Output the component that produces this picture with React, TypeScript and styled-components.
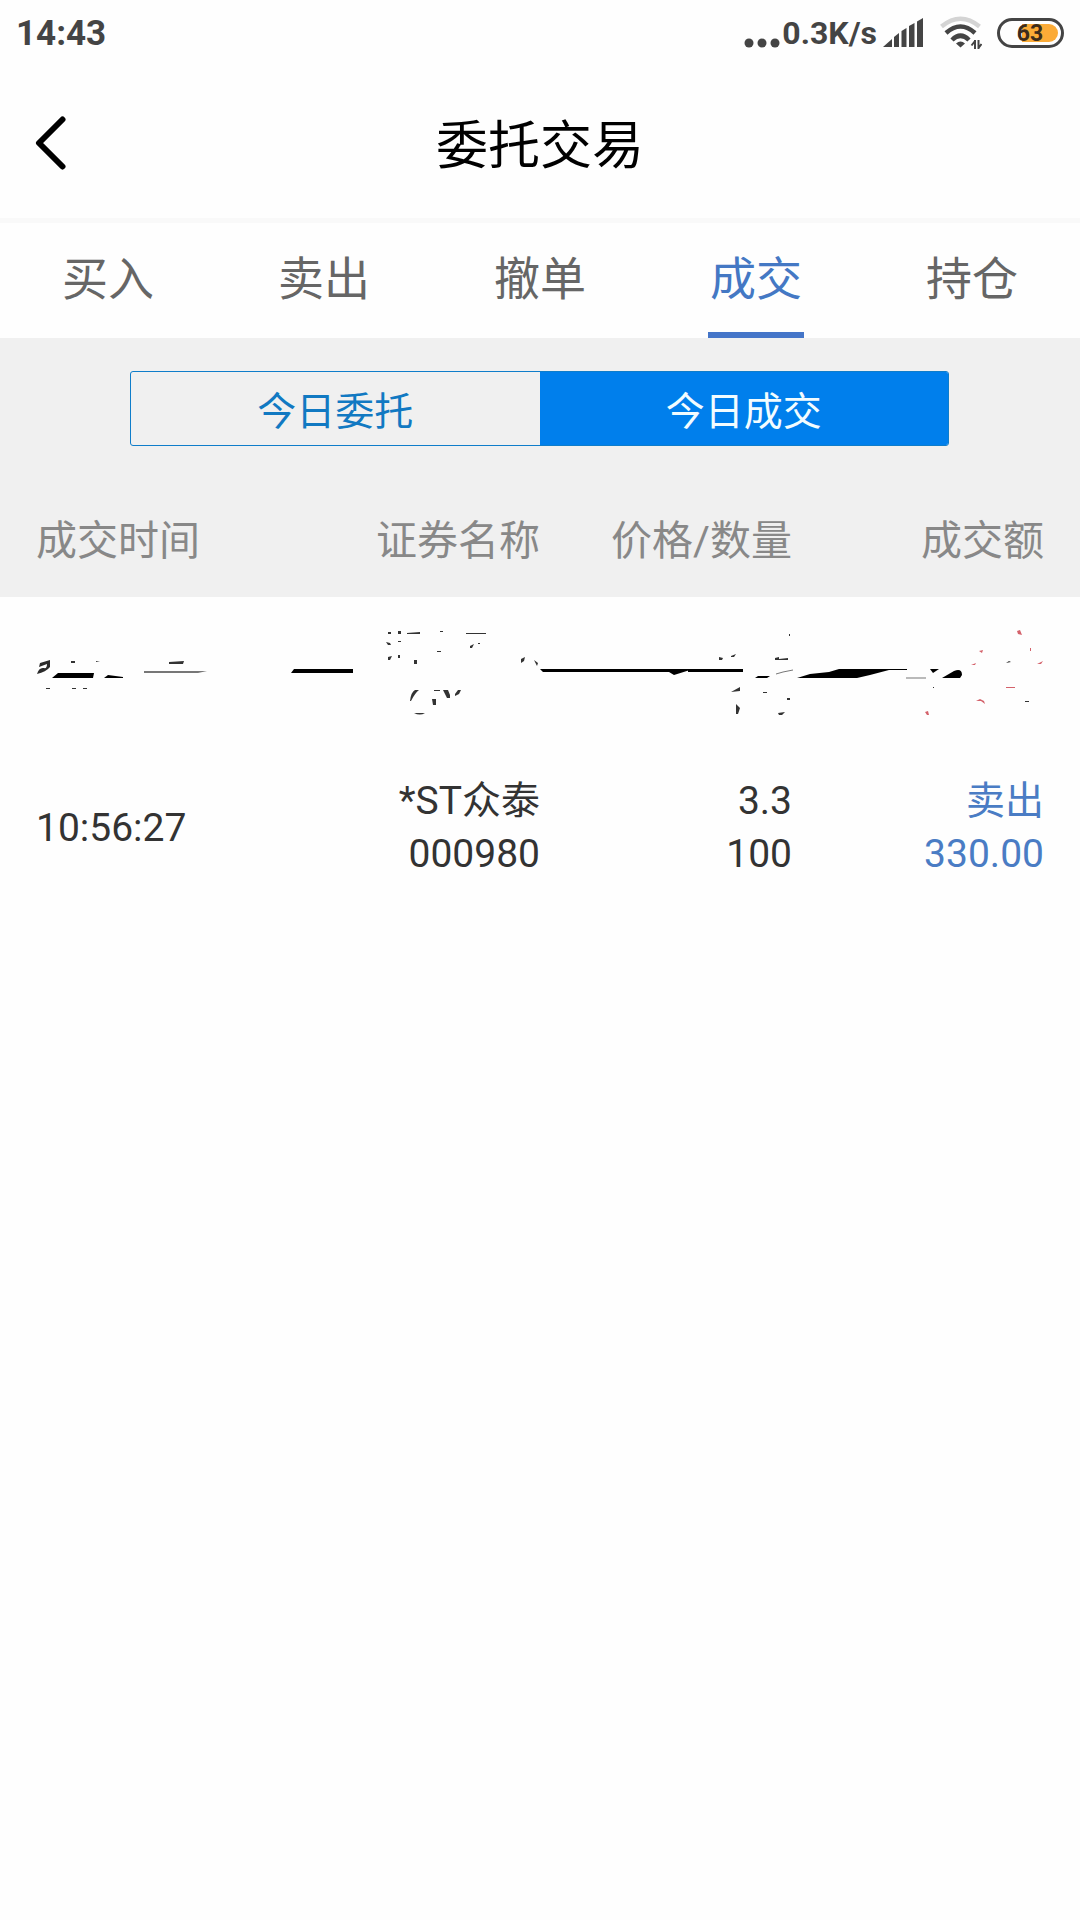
import React, { useState } from "react";
import styled, { createGlobalStyle } from "styled-components";

const GlobalStyle = createGlobalStyle`
  *, *::before, *::after { box-sizing: border-box; }
  body {
    margin: 0;
    background: #fefefe;
    color: #333333;
    font-family: Roboto, "Noto Sans CJK SC", sans-serif;
  }
  button { font-family: inherit; cursor: pointer; }
`;

const Screen = styled.div`
  min-height: 100vh;
  display: flex;
  flex-direction: column;
`;

const StatusBar = styled.div`
  display: flex;
  align-items: center;
  justify-content: space-between;
  height: 68px;
  padding: 0 16px 2px;
  font-size: 32px;
  font-weight: 700;
  color: #444444;
`;

const Clock = styled.span`
  font-size: 35px;
`;

const StatusGroup = styled.div`
  display: flex;
  align-items: center;
`;

const StatusIcon = styled.svg<{ $gap: number }>`
  display: block;
  flex: none;
  margin-left: ${(p) => p.$gap}px;
`;

const BatteryLabel = styled.text`
  font-size: 23px;
  font-weight: 700;
  fill: #3c2b1c;
`;

const Header = styled.header`
  display: grid;
  grid-template-columns: 100px 1fr 100px;
  align-items: center;
  height: 155px;
  border-bottom: 5px solid #f9f9f9;
`;

const BackButton = styled.button`
  display: flex;
  align-items: center;
  height: 100px;
  padding: 0 0 0 34px;
  border: 0;
  background: none;
`;

const Title = styled.h1`
  margin: 0;
  padding-top: 8px;
  font-size: 52px;
  font-weight: 400;
  line-height: 76px;
  text-align: center;
  color: #000000;
`;

const Tabs = styled.nav`
  display: grid;
  grid-template-columns: repeat(5, 1fr);
  height: 115px;
`;

const Tab = styled.button<{ $active: boolean }>`
  justify-self: center;
  width: 96px;
  padding: 0 0 6px;
  border: 0;
  border-bottom: 6px solid ${(p) => (p.$active ? "#4475c8" : "transparent")};
  background: none;
  font-size: 46px;
  white-space: nowrap;
  color: ${(p) => (p.$active ? "#4478c4" : "#666666")};
`;

const FilterBar = styled.div`
  display: flex;
  justify-content: center;
  padding: 33px 131px 38px 130px;
  background: #f0f0f0;
`;

const Segments = styled.div`
  display: flex;
  flex: 1;
  height: 75px;
  border: 1px solid #0f7dca;
  border-radius: 3px;
  overflow: hidden;
`;

const Segment = styled.button<{ $active: boolean }>`
  flex: 1;
  padding: 0 0 2px;
  border: 0;
  background: ${(p) => (p.$active ? "#007fec" : "transparent")};
  font-size: 39px;
  color: ${(p) => (p.$active ? "#f2fcff" : "#1179c2")};
`;

const DealTable = styled.table`
  display: block;
`;

const TableHead = styled.thead`
  display: block;
  background: #f0f0f0;
  color: #888888;
  font-size: 41px;
`;

const TableBody = styled.tbody`
  display: block;
  font-size: 39px;
`;

const Row = styled.tr<{ $height: number }>`
  display: grid;
  grid-template-columns: repeat(4, 1fr);
  align-items: center;
  min-height: ${(p) => p.$height}px;
  padding: 0 36px;
`;

const HeadCell = styled.th<{ $align?: "left" }>`
  padding: 0 0 8px;
  font-weight: 400;
  white-space: nowrap;
  text-align: ${(p) => p.$align ?? "right"};
`;

const Cell = styled.td<{ $align?: "left"; $tone?: "sell" }>`
  padding: 0;
  line-height: 53px;
  white-space: nowrap;
  text-align: ${(p) => p.$align ?? "right"};
  color: ${(p) => (p.$tone === "sell" ? "#4a7cc4" : "#333333")};
`;

const Line = styled.span`
  display: block;
`;

const HiddenCell = styled.td`
  grid-column: 1 / -1;
  margin: 0 -36px;
  padding: 0;
`;

const Scribble = styled.svg`
  display: block;
  width: 100%;
`;

const tabs = ["买入", "卖出", "撤单", "成交", "持仓"];
const segments = ["今日委托", "今日成交"];
const deals = [
  { time: "10:56:27", name: "*ST众泰", code: "000980", price: "3.3", count: "100", side: "卖出", amount: "330.00" },
];

function MoreDots() {
  return (
    <StatusIcon $gap={0} width="38" height="30" viewBox="0 0 38 30" fill="#444444">
      <circle cx="5" cy="25" r="4.5" />
      <circle cx="18" cy="25" r="4.5" />
      <circle cx="31" cy="25" r="4.5" />
    </StatusIcon>
  );
}

function Signal() {
  return (
    <StatusIcon $gap={6} width="41" height="30" viewBox="0 0 41 30" fill="#444444">
      <path d="M0 29L9 21V29Z" />
      <path d="M11 19L16 15V29H11Z" />
      <path d="M18.500 13L23.500 10V29H18.500Z" />
      <path d="M26 8L31.500 5V29H26Z" />
      <path d="M34 3.500L40 0V29H34Z" />
    </StatusIcon>
  );
}

function Wifi() {
  return (
    <StatusIcon $gap={16} width="42" height="34" viewBox="0 0 42 34" fill="none">
      <path d="M1.500 10.500Q20.500 -5 39.500 10.500" stroke="#d4d4d4" strokeWidth="4.500" />
      <path d="M6 17Q20.500 4 35 17" stroke="#444444" strokeWidth="4.500" />
      <path d="M12 24Q20.500 15.500 29 24" stroke="#444444" strokeWidth="4.500" />
      <path d="M20.500 31.500L16 27.500Q20.500 23.500 25 27.500Z" fill="#444444" />
      <path d="M35 24V33M35 25L31.500 29.500M38.500 33V24M38.500 32L41.500 28" stroke="#444444" strokeWidth="2" />
    </StatusIcon>
  );
}

function Battery() {
  return (
    <StatusIcon $gap={15} width="67" height="30" viewBox="0 0 67 30">
      <rect x="1.500" y="1.500" width="64" height="27" rx="13.500" fill="#fefefe" stroke="#444444" strokeWidth="3" />
      <path d="M25 6H52A9 9 0 0 1 52 24H25Z" fill="#fbab37" />
      <BatteryLabel x="33" y="23" textAnchor="middle">63</BatteryLabel>
    </StatusIcon>
  );
}

function HiddenDeal() {
  return (
    <Scribble viewBox="0 0 1080 153" aria-hidden="true">
      <g fill="#000000">
        <path d="M37 77Q39 70 44 71Q47 72 47 67L39 70L40 66L50 63V70Q46 75 37 77Z" fill="#2b2b2b" />
        <path d="M52 81L58 76H94L93 81Z" />
        <path d="M104 81L108 78L123 80V81Z" />
        <path d="M144 74H207L198 76H144Z" fill="#777777" />
        <path d="M169 65L184 64L183 67H169Z" fill="#333333" />
        <path d="M291 76L294 72H353V76Z" />
        <path d="M540 72H743V73H690L674 78L669 75H543Z" />
        <path d="M688 72H743V75H688Z" />
        <path d="M755 81L758 79H770L767 81Z" />
        <path d="M776 77L783 75L793 73" fill="none" stroke="#777777" />
        <path d="M797 81L810 77L829 75L839 72H907V73H889L870 78L857 81Z" />
        <path d="M906 81H926" fill="none" stroke="#777777" />
        <path d="M930 72H939L933 76Z" />
        <path d="M942 81L954 74Q962 71 962 78L960 81Z" />
      </g>
      <g fill="#333333">
        <path d="M71 64H75V66H71ZM46 91H50V92H46ZM72 91H76V92H72ZM83 91H87V92H83ZM96 64L100 65H96Z" />
        <path d="M388 35H391V37H388ZM398 34H401V37H398ZM407 36L420 35V37H407ZM440 34H443V35H440ZM466 36H486V37H466Z" />
        <path d="M386 45L390 46L391 48H388ZM398 44H401V45H398ZM388 60L392 59L390 63H388ZM398 58H400V61H398ZM414 63H417V67H414Z" />
        <path d="M437 54H441V55H437ZM470 49L474 47L472 51H470ZM478 46H480V47H478ZM521 62L525 60L524 64L521 66ZM534 63L538 66L537 69Z" />
        <path d="M410 104Q411 95 415 93H419Q415 96 411 104ZM414 116H425Q420 119 414 116ZM432 102H436V108H433ZM443 93H448L450 98V101H447ZM455 97L458 93H461L459 97L455 99ZM434 93H440V94H434Z" />
        <path d="M719 60L723 61L722 63H719ZM731 59L736 57L734 60H731ZM775 61L779 60V62L788 61V63H775ZM789 37H790V39H789Z" />
        <path d="M731 95L740 90V94ZM736 107L740 111L738 117H736ZM763 95H767V96H763ZM787 101H790V103H787ZM778 116L785 115L782 118H779Z" />
        <path d="M1006 66L1009 64L1011 65ZM1025 104H1029V105H1025ZM933 90H934V91H933Z" />
      </g>
      <g fill="#d4626b">
        <path d="M1017 34L1020 33L1022 38L1018 37ZM979 54L983 53L982 56ZM1030 51H1031V54H1030ZM1037 67L1043 64L1041 67Z" />
        <path d="M971 68L976 66L975 68ZM1006 90H1015V91H1006ZM976 104L980 102L984 104L985 107L981 104ZM925 115L928 114L929 118H927Z" />
      </g>
    </Scribble>
  );
}

export default function App() {
  const [tab, setTab] = useState("成交");
  const [segment, setSegment] = useState("今日成交");

  return (
    <Screen>
      <GlobalStyle />
      <StatusBar>
        <Clock>14:43</Clock>
        <StatusGroup>
          <MoreDots />
          <span>0.3K/s</span>
          <Signal />
          <Wifi />
          <Battery />
        </StatusGroup>
      </StatusBar>
      <Header>
        <BackButton type="button" aria-label="返回">
          <svg width="34" height="54" viewBox="0 0 34 54" fill="none" stroke="#000000" strokeWidth="6" strokeLinecap="round" strokeLinejoin="round">
            <path d="M28.500 3.500L5 27L28.500 50.500" />
          </svg>
        </BackButton>
        <Title>委托交易</Title>
      </Header>
      <Tabs>
        {tabs.map((t) => (
          <Tab key={t} type="button" $active={t === tab} onClick={() => setTab(t)}>
            {t}
          </Tab>
        ))}
      </Tabs>
      <FilterBar>
        <Segments>
          {segments.map((s) => (
            <Segment key={s} type="button" $active={s === segment} onClick={() => setSegment(s)}>
              {s}
            </Segment>
          ))}
        </Segments>
      </FilterBar>
      <DealTable>
        <TableHead>
          <Row $height={113}>
            <HeadCell $align="left">成交时间</HeadCell>
            <HeadCell>证券名称</HeadCell>
            <HeadCell>价格/数量</HeadCell>
            <HeadCell>成交额</HeadCell>
          </Row>
        </TableHead>
        <TableBody>
          <Row $height={153}>
            <HiddenCell colSpan={4}>
              <HiddenDeal />
            </HiddenCell>
          </Row>
          {deals.map((d) => (
            <Row key={d.time} $height={156}>
              <Cell $align="left">{d.time}</Cell>
              <Cell>
                <Line>{d.name}</Line>
                <Line>{d.code}</Line>
              </Cell>
              <Cell>
                <Line>{d.price}</Line>
                <Line>{d.count}</Line>
              </Cell>
              <Cell $tone="sell">
                <Line>{d.side}</Line>
                <Line>{d.amount}</Line>
              </Cell>
            </Row>
          ))}
        </TableBody>
      </DealTable>
    </Screen>
  );
}
